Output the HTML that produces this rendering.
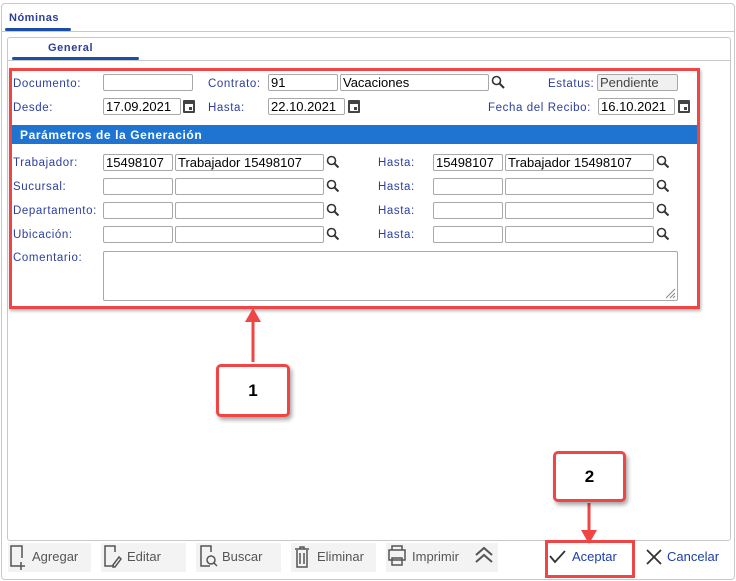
<!DOCTYPE html>
<html><head><meta charset="utf-8"><style>
*{box-sizing:border-box;margin:0;padding:0}
body{width:736px;height:581px;background:#fff;position:relative;overflow:hidden;font-family:"Liberation Sans",sans-serif}
.a{position:absolute}
.l{position:absolute;font-size:11.5px;color:#2c3e9c;letter-spacing:.6px;margin-top:1px}
.i{position:absolute;height:17px;border:1px solid #a8a8a8;border-radius:2px;background:#fff;font-size:13px;color:#000;padding-left:2px;line-height:15px;white-space:nowrap;overflow:hidden}
.s{position:absolute;width:14px;height:14px}
.c{position:absolute;width:12px;height:13px;background:#444;border-radius:1px}
.c:after{content:"";position:absolute;left:2px;top:4px;width:8px;height:7px;background:#fff}
.c:before{content:"";position:absolute;left:6px;top:7px;width:3px;height:3px;background:#444;z-index:1}
.b{position:absolute;top:543px;height:29px;background:#f3f3f3;font-size:13px;color:#555;line-height:27px}
.call{position:absolute;border:3px solid #f04545;border-radius:5px;background:#fff;box-shadow:2px 3px 4px rgba(0,0,0,.35);font:bold 17px "Liberation Sans",sans-serif;text-align:center}
</style></head><body>
<div class="a" style="left:1px;top:3px;width:734px;height:577px;border:1px solid #c8c8c8;border-radius:4px"></div>
<div class="a" style="left:9px;top:12px;font-size:11px;font-weight:bold;color:#2c3e9c;letter-spacing:.5px">Nóminas</div>
<div class="a" style="left:5px;top:28px;width:66px;height:3px;background:#1b4fa5;border-radius:2px"></div>
<div class="a" style="left:2px;top:31px;width:732px;height:1px;background:#c8c8c8"></div>
<div class="a" style="left:7px;top:37px;width:724px;height:504px;border:1px solid #c8c8c8;border-radius:3px"></div>
<div class="a" style="left:48px;top:42px;font-size:11px;font-weight:bold;color:#2c3e9c;letter-spacing:.6px">General</div>
<div class="a" style="left:12px;top:57px;width:127px;height:3px;background:#1b4fa5;border-radius:2px"></div>
<div class="a" style="left:8px;top:60px;width:722px;height:1px;background:#c8c8c8"></div>
<div class="a" style="left:9px;top:68px;width:691px;height:241px;border:3px solid #f04545;box-shadow:1px 2px 3px rgba(0,0,0,.3)"></div>

<div class="l" style="left:13px;top:77px">Documento:</div>
<div class="i" style="left:103px;top:74px;width:90px"></div>
<div class="l" style="left:208px;top:77px">Contrato:</div>
<div class="i" style="left:268px;top:74px;width:70px">91</div>
<div class="i" style="left:340px;top:74px;width:149px">Vacaciones</div>
<svg class="s" style="left:491px;top:75px" viewBox="0 0 14 14"><circle cx="5.5" cy="5.5" r="4" fill="none" stroke="#333" stroke-width="1.6"/><path d="M8.5 8.5L13 13" stroke="#333" stroke-width="2"/></svg>
<div class="l" style="left:548px;top:77px">Estatus:</div>
<div class="i" style="left:597px;top:74px;width:81px;background:#f0f0f0;color:#444">Pendiente</div>

<div class="l" style="left:13px;top:101px">Desde:</div>
<div class="i" style="left:103px;top:98px;width:78px">17.09.2021</div><div class="c" style="left:183px;top:100px"></div>
<div class="l" style="left:208px;top:101px">Hasta:</div>
<div class="i" style="left:268px;top:98px;width:77px">22.10.2021</div><div class="c" style="left:348px;top:100px"></div>
<div class="l" style="left:488px;top:101px">Fecha del Recibo:</div>
<div class="i" style="left:598px;top:98px;width:77px">16.10.2021</div><div class="c" style="left:678px;top:100px"></div>

<div class="a" style="left:12px;top:125px;width:685px;height:19px;background:#1e74d0;color:#fff;font-size:12px;font-weight:bold;letter-spacing:.6px;line-height:20px;padding-left:8px">Parámetros de la Generación</div>

<div class="l" style="left:13px;top:156px">Trabajador:</div>
<div class="l" style="left:13px;top:180px">Sucursal:</div>
<div class="l" style="left:13px;top:204px">Departamento:</div>
<div class="l" style="left:13px;top:228px">Ubicación:</div>
<div class="l" style="left:378px;top:156px">Hasta:</div>
<div class="l" style="left:378px;top:180px">Hasta:</div>
<div class="l" style="left:378px;top:204px">Hasta:</div>
<div class="l" style="left:378px;top:228px">Hasta:</div>

<div class="i" style="left:103px;top:154px;width:70px">15498107</div><div class="i" style="left:175px;top:154px;width:149px">Trabajador 15498107</div>
<div class="i" style="left:103px;top:178px;width:70px"></div><div class="i" style="left:175px;top:178px;width:149px"></div>
<div class="i" style="left:103px;top:202px;width:70px"></div><div class="i" style="left:175px;top:202px;width:149px"></div>
<div class="i" style="left:103px;top:226px;width:70px"></div><div class="i" style="left:175px;top:226px;width:149px"></div>
<div class="i" style="left:433px;top:154px;width:70px">15498107</div><div class="i" style="left:505px;top:154px;width:149px">Trabajador 15498107</div>
<div class="i" style="left:433px;top:178px;width:70px"></div><div class="i" style="left:505px;top:178px;width:149px"></div>
<div class="i" style="left:433px;top:202px;width:70px"></div><div class="i" style="left:505px;top:202px;width:149px"></div>
<div class="i" style="left:433px;top:226px;width:70px"></div><div class="i" style="left:505px;top:226px;width:149px"></div>
<svg class="a" style="left:0;top:0" width="736" height="581">
<g fill="none" stroke="#333" stroke-width="1.6">
<circle cx="331.5" cy="160.5" r="4"/><circle cx="331.5" cy="184.5" r="4"/><circle cx="331.5" cy="208.5" r="4"/><circle cx="331.5" cy="232.5" r="4"/>
<circle cx="661.5" cy="160.5" r="4"/><circle cx="661.5" cy="184.5" r="4"/><circle cx="661.5" cy="208.5" r="4"/><circle cx="661.5" cy="232.5" r="4"/>
</g><g stroke="#333" stroke-width="2">
<path d="M334.5 163.5l4 4M334.5 187.5l4 4M334.5 211.5l4 4M334.5 235.5l4 4M664.5 163.5l4 4M664.5 187.5l4 4M664.5 211.5l4 4M664.5 235.5l4 4"/></g>
<path d="M253 362V318" stroke="#f04545" stroke-width="3"/><path d="M245 322L253 308L261 322Z" fill="#f04545"/>
<path d="M589 503V532" stroke="#f04545" stroke-width="3"/><path d="M581 530L589 544L597 530Z" fill="#f04545"/>
</svg>
<div class="l" style="left:13px;top:251px">Comentario:</div>
<div class="i" style="left:103px;top:251px;width:575px;height:50px"></div>
<svg class="a" style="left:664px;top:287px" width="12" height="12"><path d="M11 2L2 11M11 6L6 11M11 9L9 11" stroke="#888"/></svg>

<div class="call" style="left:216px;top:364px;width:74px;height:53px;line-height:47px">1</div>
<div class="call" style="left:553px;top:451px;width:73px;height:51px;line-height:45px">2</div>

<div class="b" style="left:8px;width:83px;padding-left:24px">Agregar</div>
<div class="b" style="left:101px;width:85px;padding-left:26px">Editar</div>
<div class="b" style="left:196px;width:85px;padding-left:26px">Buscar</div>
<div class="b" style="left:291px;width:85px;padding-left:26px">Eliminar</div>
<div class="b" style="left:386px;width:112px;padding-left:26px">Imprimir</div>
<svg class="a" style="left:0;top:540px" width="736" height="41" fill="none" stroke="#555" stroke-width="1.5">
<path d="M19 26H11V6H22V18M21 22v8M17 26h8"/>
<path d="M114 26h-9V6h10v6M113 25l6-8 2 2-6 8h-2z"/>
<path d="M210 26h-9V6h10v6"/><circle cx="211" cy="20" r="4"/><path d="M214 23l3 3"/>
<path d="M295 9h14M300 9V7h4v2M297 10v17h10V10M300 13v11M304 13v11"/>
<path d="M392 10V6h10v4M389 10h16v10h-16zM392 18h10v7h-10z"/>
<path d="M476 15l8-7 8 7M476 22l8-7 8 7" stroke-width="2"/>
<path d="M550 16l5 6 10-11" stroke="#333" stroke-width="1.8"/>
<path d="M647 10l14 14M661 10l-14 14" stroke="#333" stroke-width="1.8"/>
</svg>
<div class="a" style="left:572px;top:542px;font-size:13px;color:#1c3fa8;line-height:29px">Aceptar</div>
<div class="a" style="left:667px;top:542px;font-size:13px;color:#1c3fa8;line-height:29px">Cancelar</div>
<div class="a" style="left:545px;top:540px;width:90px;height:38px;border:3px solid #f04545"></div>
</body></html>
